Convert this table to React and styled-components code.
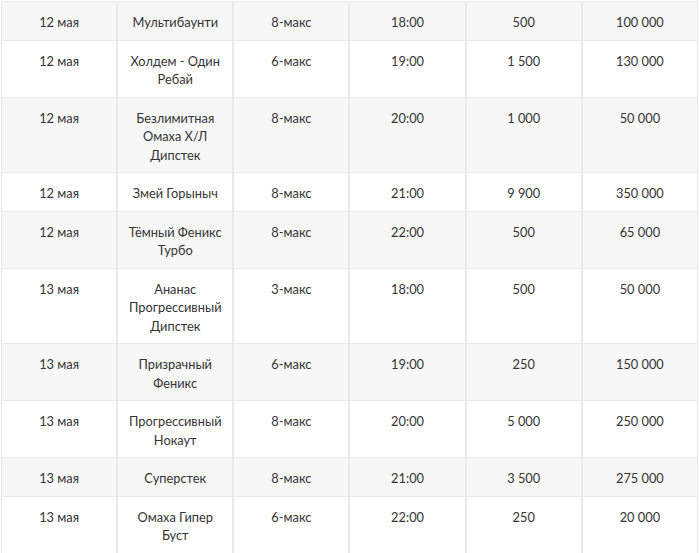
import React from "react";
import styled, { createGlobalStyle } from "styled-components";

const GlobalStyle = createGlobalStyle`
  body {
    margin: 0;
    background: #fff;
    font-family: Lato, "Open Sans", sans-serif;
  }
`;

const Wrapper = styled.div`
  padding: 1px 0 0 1px;
  width: 698px;
`;

const Table = styled.table`
  width: 697px;
  table-layout: fixed;
  border-collapse: separate;
  border-spacing: 0;
  border-top: 1px solid #e9e9e9;
  font-size: 12.8px;
  color: #333;
`;

const Row = styled.tr`
  background: ${props => (props.$striped ? "#f7f7f7" : "#fff")};
`;

const Cell = styled.td`
  padding: 11px 8px 8px;
  line-height: 18.5px;
  text-align: center;
  vertical-align: top;
  border-left: 1px solid #e9e9e9;
  border-right: 1px solid #e9e9e9;
  border-bottom: 1px solid #e9e9e9;
`;

const rows = [
  ["12 мая", "Мультибаунти", "8-макс", "18:00", "500", "100 000"],
  ["12 мая", "Холдем - Один Ребай", "6-макс", "19:00", "1 500", "130 000"],
  ["12 мая", "Безлимитная Омаха Х/Л Дипстек", "8-макс", "20:00", "1 000", "50 000"],
  ["12 мая", "Змей Горыныч", "8-макс", "21:00", "9 900", "350 000"],
  ["12 мая", "Тёмный Феникс Турбо", "8-макс", "22:00", "500", "65 000"],
  ["13 мая", "Ананас Прогрессивный Дипстек", "3-макс", "18:00", "500", "50 000"],
  ["13 мая", "Призрачный Феникс", "6-макс", "19:00", "250", "150 000"],
  ["13 мая", "Прогрессивный Нокаут", "8-макс", "20:00", "5 000", "250 000"],
  ["13 мая", "Суперстек", "8-макс", "21:00", "3 500", "275 000"],
  ["13 мая", "Омаха Гипер Буст", "6-макс", "22:00", "250", "20 000"]
];

function App() {
  return (
    <Wrapper>
      <GlobalStyle />
      <Table>
        <tbody>
          {rows.map((row, i) => (
            <Row key={i} $striped={i % 2 === 0}>
              {row.map((value, j) => (
                <Cell key={j}>{value}</Cell>
              ))}
            </Row>
          ))}
        </tbody>
      </Table>
    </Wrapper>
  );
}

export default App;
